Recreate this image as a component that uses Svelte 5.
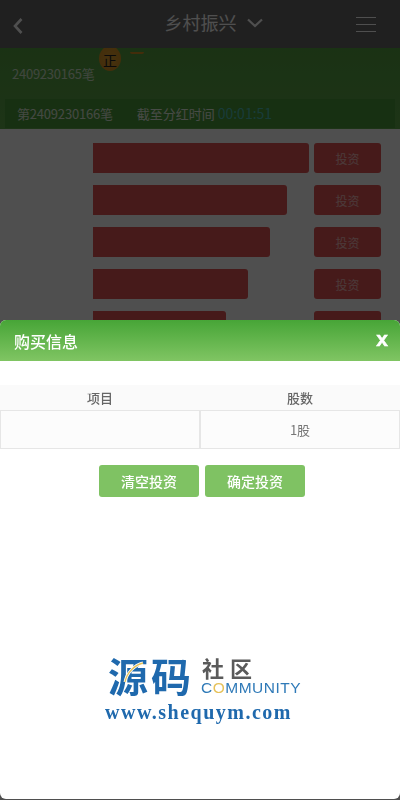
<script>
  const rows = [216, 194, 177, 155, 133];
</script>

<div class="page">
  <header class="top">
    <svg class="back" width="12" height="18" viewBox="0 0 12 18"><path d="M9.500 2 3 9l6.500 7" fill="none" stroke="#fff" stroke-width="2.600"/></svg>
    <div class="title">
      <span>乡村振兴</span>
      <svg class="chev" width="16" height="10" viewBox="0 0 16 10"><path d="M1 1.500l7 6.500 7-6.500" fill="none" stroke="#fff" stroke-width="2.200"/></svg>
    </div>
    <div class="burger"><i></i><i></i><i></i></div>
  </header>

  <section class="green">
    <span class="coin">正</span>
    <span class="coin-edge"></span>
    <div class="prev">2409230165笔</div>
    <div class="notice">
      <span class="cur">第2409230166笔</span>
      <span class="until">截至分红时间 <b>00:01:51</b></span>
    </div>
  </section>

  <section class="list">
    {#each rows as w}
      <div class="row">
        <div class="track"><div class="bar" style="width:{w}px"></div></div>
        <button class="invest">投资</button>
      </div>
    {/each}
  </section>
</div>

<div class="mask"></div>

<div class="sheet">
  <div class="sheet-head">
    <span>购买信息</span>
    <span class="x">x</span>
  </div>
  <div class="table">
    <div class="th">项目</div>
    <div class="th">股数</div>
    <div class="td"></div>
    <div class="td">1股</div>
  </div>
  <div class="actions">
    <button class="act">清空投资</button>
    <button class="act">确定投资</button>
  </div>
  <div class="logo">
    <div class="logo-top">
      <span class="yuan">源码</span>
      <div class="logo-side">
        <span class="she">社区</span>
        <span class="comm">C<em>O</em>MMUNITY</span>
      </div>
      <svg class="arc" width="45" height="40" viewBox="0 0 45 40">
        <path d="M20 28C22 18 30 11 38 9" fill="none" stroke="#fff" stroke-width="3"/>
        <path d="M20 28C22 18 30 11 38 9" fill="none" stroke="#e6c25a" stroke-width="1.300"/>
      </svg>
    </div>
    <div class="url">www.shequym.com</div>
  </div>
</div>

<style>
  :global(body) {
    margin: 0;
    background: #fff;
    font-family: "Noto Sans CJK SC", "Noto Sans", sans-serif;
  }
  .page {
    width: 400px;
    height: 800px;
    overflow: hidden;
    background: #fff;
  }
  .top {
    height: 48px;
    background: #686868;
    display: flex;
    align-items: center;
    justify-content: space-between;
    padding: 0 24px 0 12px;
    box-sizing: border-box;
  }
  .back { margin-top: 3px; }
  .title {
    display: flex;
    align-items: center;
    gap: 10px;
    color: #fff;
    font-size: 18px;
    font-weight: 400;
    line-height: 24px;
    margin-left: 47px;
    margin-top: -4px;
  }
  .chev { margin-top: 2px; }
  .burger {
    width: 20px;
    display: flex;
    flex-direction: column;
    gap: 6px;
  }
  .burger i {
    display: block;
    height: 1px;
    background: #fff;
  }
  .green {
    height: 81px;
    background: linear-gradient(#56a242, #5ea84a);
    position: relative;
    overflow: hidden;
    padding-top: 14px;
    box-sizing: border-box;
  }
  .coin {
    position: absolute;
    left: 99px;
    top: -2px;
    width: 22px;
    height: 25px;
    border-radius: 50%;
    background: radial-gradient(#e0a030, #d89020);
    color: #222;
    font-size: 14px;
    line-height: 28px;
    text-align: center;
  }
  .coin-edge {
    position: absolute;
    left: 130px;
    top: 4px;
    width: 14px;
    height: 2px;
    border-radius: 0 0 7px 7px;
    background: #d89020;
  }
  .prev {
    margin-left: 12px;
    color: #fff;
    opacity: .7;
    font-size: 13px;
    letter-spacing: -.25px;
    line-height: 24px;
  }
  .notice {
    position: absolute;
    left: 5px;
    right: 5px;
    top: 51px;
    height: 29px;
    background: #4c9a3a;
    display: flex;
    align-items: center;
    padding: 0 0 1px 12px;
    box-sizing: border-box;
    gap: 25px;
    color: #fff;
    font-size: 13px;
  }
  .cur { opacity: .8; letter-spacing: -.2px; }
  .until { opacity: .85; margin-left: -1px; }
  .until b {
    font-weight: 400;
    font-size: 14px;
    color: #4fc8d0;
  }
  .list {
    background: #fff;
    padding-top: 14px;
    display: flex;
    flex-direction: column;
    gap: 12px;
  }
  .row {
    display: flex;
    height: 30px;
    gap: 5px;
    padding-left: 93px;
  }
  .track { width: 216px; }
  .bar {
    height: 30px;
    background: #e25656;
    border-radius: 0 3px 3px 0;
  }
  .invest {
    width: 67px;
    height: 30px;
    border: 0;
    padding: 0;
    border-radius: 3px;
    background: #e25656;
    color: rgba(255, 255, 255, .6);
    font: inherit;
    font-size: 12px;
  }
  .mask {
    position: fixed;
    inset: 0;
    background: rgba(0, 0, 0, .69);
  }
  .sheet {
    position: fixed;
    left: 0;
    right: 0;
    top: 320px;
    height: 479px;
    background: #fff;
    border-radius: 6px;
    overflow: hidden;
  }
  .sheet-head {
    height: 41px;
    background: linear-gradient(#47a537, #80c563);
    display: flex;
    justify-content: space-between;
    align-items: center;
    padding: 0 12px 0 14px;
    color: #fff;
    font-size: 16px;
    font-weight: 500;
  }
  .x {
    font-family: "Liberation Sans", sans-serif;
    font-size: 21px;
    font-weight: 700;
    line-height: 20px;
    margin-top: -4px;
    -webkit-text-stroke: .5px #fff;
  }
  .table {
    margin-top: 24px;
    display: grid;
    grid-template-columns: 1fr 1fr;
    grid-template-rows: 25px 39px;
    background: #fafafa;
    color: #666;
    font-size: 13px;
    text-align: center;
  }
  .th {
    line-height: 25px;
    font-weight: 500;
  }
  .td {
    border: 1px solid #e6e6e6;
    background: #fcfcfc;
    line-height: 37px;
    font-size: 13px;
    color: #777;
  }
  .actions {
    display: flex;
    justify-content: center;
    gap: 6px;
    margin-top: 16px;
    padding-left: 4px;
  }
  .act {
    width: 100px;
    height: 32px;
    border: 0;
    padding: 0;
    border-radius: 3px;
    background: #7fc263;
    color: #fff;
    font: inherit;
    font-size: 14px;
    font-weight: 500;
  }
  .logo {
    margin-top: 156px;
    margin-left: 105px;
    width: 200px;
  }
  .logo-top {
    position: relative;
    display: flex;
    align-items: flex-start;
    height: 45px;
  }
  .arc { position: absolute; left: 0; top: 1px; }
  .yuan {
    font-size: 40px;
    line-height: 44px;
    font-weight: 700;
    color: #1f69ad;
    letter-spacing: 3px;
    margin-left: 3px;
    white-space: nowrap;
  }
  .logo-side {
    display: flex;
    flex-direction: column;
    margin-left: 8px;
    margin-top: 2px;
  }
  .she {
    font-size: 22px;
    line-height: 24px;
    font-weight: 700;
    color: #5a5a5a;
    letter-spacing: 6px;
    white-space: nowrap;
  }
  .comm {
    font-family: "Liberation Sans", sans-serif;
    font-size: 15.500px;
    line-height: 18px;
    color: #2f7ab8;
    letter-spacing: .5px;
    margin-left: -1px;
    white-space: nowrap;
  }
  .comm em { font-style: normal; color: #e6c25a; }
  .url {
    font-family: "Liberation Serif", serif;
    font-weight: 700;
    font-size: 20px;
    line-height: 22px;
    letter-spacing: 1.500px;
    color: #1f69ad;
    white-space: nowrap;
    margin-top: 3px;
  }
</style>
